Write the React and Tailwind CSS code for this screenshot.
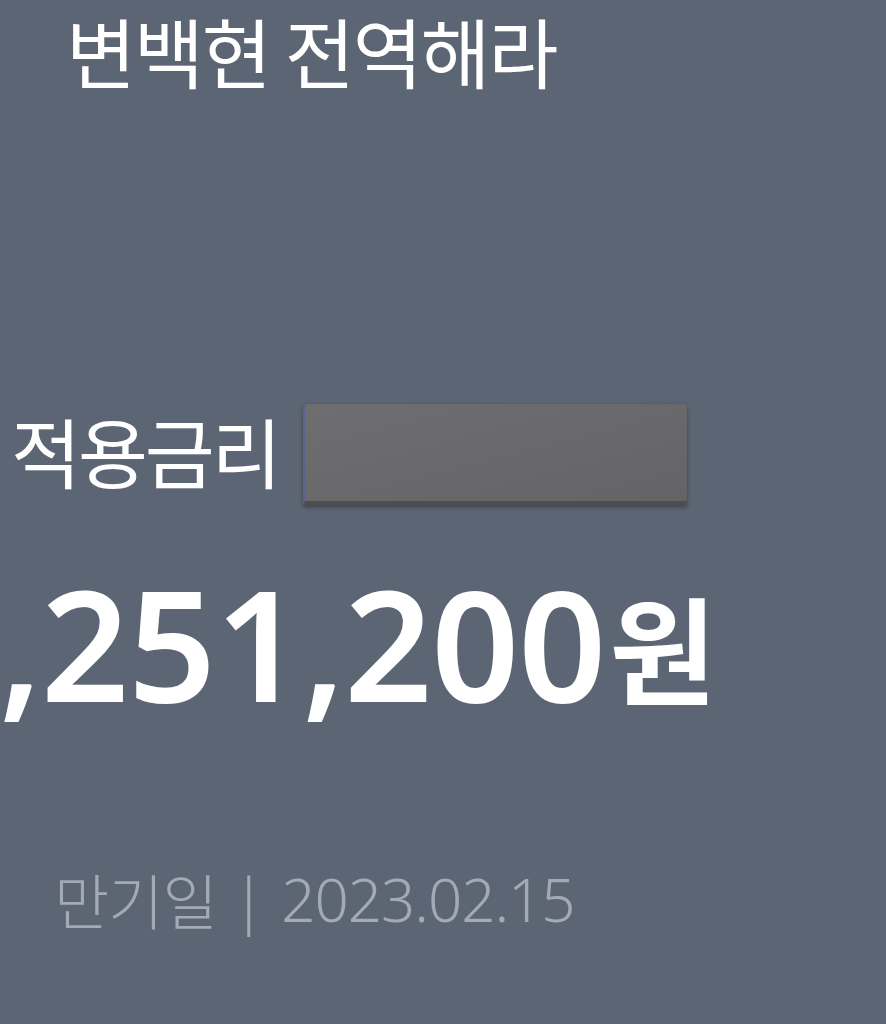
import React from 'react'

export default function App() {
  return (
    <div className="w-[886px] h-[1024px] overflow-hidden bg-[#5c6573] text-white font-['Noto_Sans_CJK_KR',sans-serif]">
      <div className="pt-[12px] pl-[66px] text-[76px] leading-none tracking-[-2px]">변백현 전역해라</div>

      <div className="mt-[314px] flex items-start">
        <span className="mt-[10px] pl-[11px] text-[76px] leading-none tracking-[-3px]">적용금리</span>
        <div className="ml-[24px] mt-[2px] w-[384px] h-[101px] rounded-t-[4px] rounded-b-[2px] bg-gradient-to-br from-[#6e6e71] via-[#69696c] to-[#646467] border-l-2 border-b-4 border-l-[#5a6290] border-b-[#4d4d52] shadow-[0_2px_4px_rgba(0,0,0,0.35)]"></div>
      </div>

      <div className="mt-[60px] -ml-[1px] flex items-baseline font-['Noto_Sans',sans-serif] font-semibold text-[154px] leading-none whitespace-nowrap">
        <span className="tracking-[-1px]">,251,200</span>
        <span className="ml-[4px] font-['Noto_Sans_CJK_KR',sans-serif] font-bold text-[116px] relative -top-[6px]">원</span>
      </div>

      <div className="mt-[150px] pl-[54px] flex items-center text-[60px] leading-none text-[#a3aab6]">
        <span className="font-['Noto_Sans_CJK_KR',sans-serif] font-light tracking-[-1px]">만기일</span>
        <span className="mx-[16px] font-['Noto_Sans',sans-serif] font-light">|</span>
        <span className="font-['Noto_Sans',sans-serif] font-light tracking-[-1px]">2023.02.15</span>
      </div>
    </div>
  )
}
